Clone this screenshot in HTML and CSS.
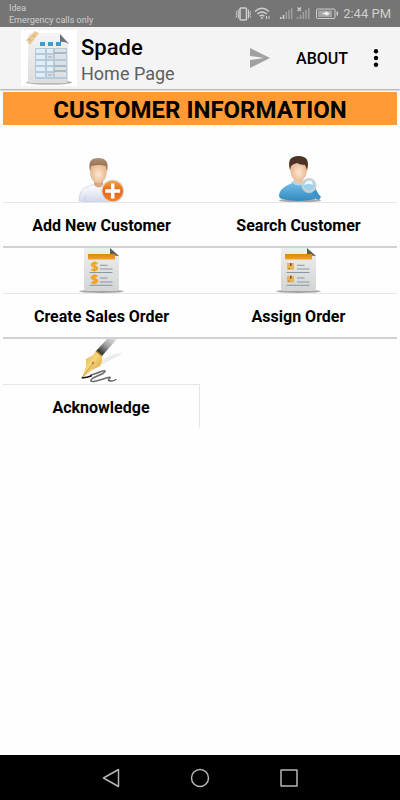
FILE: index.html
```html
<!DOCTYPE html>
<html lang="en">
<head>
<meta charset="utf-8">
<meta name="viewport" content="width=device-width, initial-scale=1">
<title>Spade</title>
<link rel="stylesheet" href="styles.css">
</head>
<body>
<div class="status">
  <div class="carrier"><span>Idea</span><span>Emergency calls only</span></div>
  <svg class="status-icons" width="104" height="16" viewBox="235 6 104 16" fill="none" stroke="#cfcfcf" aria-hidden="true">
    <rect x="240" y="8" width="6.500" height="12" rx="1" stroke-width="1.500"/>
    <path d="M236 11l1 1.500-1 1.500 1 1.500-1 2M238.300 9.500v9M250.700 11l-1 1.500 1 1.500-1 1.500 1 2M248.500 9.500v9" stroke-width="1"/>
    <path d="M255 11.500q7-6.500 14 0M257.300 14q4.700-4 9.400 0M259.600 16.300q2.400-2 4.800 0" stroke-width="1.400"/>
    <circle cx="262" cy="18" r="1" fill="#cfcfcf" stroke="none"/>
    <path d="M266.500 19v-3M269 19v-3" stroke-width="1"/>
    <path d="M280.700 19v-2M283.500 19v-4" stroke-width="1.600"/>
    <path d="M286.300 19v-7M289 19v-9M291.700 19V8M300.500 19v-4M303.300 19v-7M306 19v-9M308.800 19V8" stroke="#a0a0a0" stroke-width="1.500"/>
    <path d="M297.500 19v-2" stroke="#a0a0a0" stroke-width="1.500"/>
    <path d="M297.500 7.500l3.500 3.500M301 7.500l-3.500 3.500" stroke-width="1.200"/>
    <rect x="316.500" y="9" width="18.500" height="9.500" rx="1"/>
    <rect x="318" y="10.500" width="14" height="6.500" fill="#a4a4a4" stroke="none"/>
    <path d="M337.300 11.500v4" stroke-width="1.500"/>
    <path d="M321.500 13.800l4-1.500v-1.300l4.500 2.500-4 2.500v-1.300z" fill="#eee" stroke="none"/>
  </svg>
  <span class="time">2:44 PM</span>
</div>
<header class="appbar">
  <svg class="logo" width="56" height="56" viewBox="0 0 56 56" aria-hidden="true">
    <defs>
      <linearGradient id="sheet" x1="0" y1="0" x2="0" y2="1"><stop offset="0" stop-color="#f4f4f4"/><stop offset="1" stop-color="#dcdddf"/></linearGradient>
    </defs>
    <rect width="56" height="56" fill="#fff"/>
    <ellipse cx="28" cy="52.500" rx="23" ry="2.300" fill="#b9b9b9"/>
    <path d="M9 3h30l8 9v38q0 3-3 3H10q-3 0-3-3V5q0-2 2-2z" fill="url(#sheet)"/>
    <path d="M39 4l9 10q-5-3-9-2z" fill="#68727c"/>
    <path d="M5 10l9-9 4 2-9 12z" fill="#e9ca99"/>
    <path d="M8 9l2 2M12 5l2 2" stroke="#c99e60"/>
    <path d="M19 12h5v4h-5zM27 12h5v4h-5zM35 12h5v4h-5z" fill="#409bc9"/>
    <rect x="14" y="18" width="32" height="31" fill="#b6c9d8"/>
    <path d="M15 19h9v4h-9zM15 25h9v4h-9zM15 31h9v4h-9zM15 37h9v4h-9zM15 43h9v4h-9zM26 19h6v4h-6zM26 31h6v4h-6zM26 37h6v4h-6z" fill="#e0eef7"/>
    <path d="M26 25h6v4h-6zM26 43h6v4h-6zM34 19h11v3H34zM34 24h11v5H34zM34 31h11v4H34zM34 37h11v3H34zM34 42h11v5H34z" fill="#dbe1e5"/>
    <path d="M33 23h12M33 36h12M33 41h12M27 27h4M27 45h4" stroke="#9aa9b3"/>
  </svg>
  <div class="titles"><h1>Spade</h1><p>Home Page</p></div>
  <button class="send" type="button" aria-label="Send">
    <svg width="22" height="22" viewBox="0 0 22 22"><path d="M1 1l20 10L1 21V13l14-2L1 9z" fill="#a1a1a1"/></svg>
  </button>
  <button class="about" type="button">ABOUT</button>
  <button class="more" type="button" aria-label="More options">
    <svg width="6" height="18" viewBox="0 0 6 18"><circle cx="3" cy="2.300" r="2.200"/><circle cx="3" cy="9" r="2.200"/><circle cx="3" cy="15.700" r="2.200"/></svg>
  </button>
</header>
<main>
  <h2>CUSTOMER INFORMATION</h2>
  <div class="grid">
    <a class="tile" href="#add">
      <svg width="49" height="45" viewBox="0 0 49 45" aria-hidden="true">
        <defs>
          <radialGradient id="skin" cx=".5" cy=".6" r=".6"><stop offset="0" stop-color="#ffe7cf"/><stop offset="1" stop-color="#dfad83"/></radialGradient>
          <linearGradient id="shirt" x1="0" y1="0" x2="0" y2="1"><stop offset="0" stop-color="#fff"/><stop offset="1" stop-color="#d0d7eb"/></linearGradient>
          <linearGradient id="badge" x1="0" y1="0" x2="0" y2="1"><stop offset="0" stop-color="#f4a13c"/><stop offset=".5" stop-color="#e3671c"/><stop offset="1" stop-color="#f08426"/></linearGradient>
          <linearGradient id="hair" x1="0" y1="0" x2="0" y2="1"><stop offset="0" stop-color="#b58e70"/><stop offset="1" stop-color="#806047"/></linearGradient>
        </defs>
        <path d="M2 44q0-12 8-14l7-3h9l7 3q4 3 4 14-17 3-35 0z" fill="url(#shirt)" stroke="#c5cbdd" stroke-width=".6"/>
        <path d="M17 21h9v7q-4 5-9 0z" fill="#d8a882"/>
        <path d="M13 11Q13 4 21.300 4T30 11q0 15-8.700 15T13 11z" fill="url(#skin)"/>
        <path d="M13 14Q10 1 21 1q12 0 9 13l-1-5q-7-2-15 0z" fill="url(#hair)"/>
        <path d="M8 44v-5M33 31v6" stroke="#c7cee0"/>
        <circle cx="35.700" cy="34" r="11.500" fill="#d9dadd"/>
        <circle cx="35.700" cy="34" r="10.300" fill="url(#badge)"/>
        <path d="M35.700 26.500v15M28.200 34h15" stroke="#fff" stroke-width="3.500"/>
      </svg>
      <span>Add New Customer</span>
    </a>
    <a class="tile" href="#search">
      <svg width="49" height="45" viewBox="0 0 49 45" aria-hidden="true">
        <defs>
          <linearGradient id="blue" x1="0" y1="0" x2="0" y2="1"><stop offset="0" stop-color="#79bfe4"/><stop offset="1" stop-color="#2e8ac2"/></linearGradient>
        </defs>
        <ellipse cx="26" cy="43.500" rx="21" ry="1.700" fill="#aaa"/>
        <path d="M5 38q1-7 11-11l4-2h10l8 4q5 2 6 9l-3 4q-16 4-33 0-3-1-3-4z" fill="url(#blue)"/>
        <path d="M17 25l4-2h8l4 2q-8 7-16 0z" fill="#a5dbf1"/>
        <path d="M20 18h9v7q-4 3-9 0z" fill="#efc5a0"/>
        <path d="M16 10Q16 2 24.500 2T33.500 10q-1 14-9 14T16 10z" fill="url(#skin)"/>
        <path d="M16 13Q12-1 24.500-1 37-1 33 13q-1-3-2-5-5 0-8-2-4 1-6 3z" fill="#4d3325"/>
        <path d="M38 34l4 0 5 6-2 3-3-1z" fill="#3a94c9"/>
        <circle cx="35" cy="28.500" r="6.300" fill="#9dd2ec" stroke="#cbcfd2" stroke-width="2.400"/>
        <path d="M30 28q2-6 8-4l1 4q-4-2-9 0z" fill="#ecf8fd"/>
      </svg>
      <span>Search Customer</span>
    </a>
    <a class="tile" href="#create">
      <svg width="49" height="45" viewBox="0 0 49 45" aria-hidden="true">
        <defs>
          <linearGradient id="paper" x1="0" y1="0" x2="0" y2="1"><stop offset="0" stop-color="#efefef"/><stop offset="1" stop-color="#d3d4d5"/></linearGradient>
          <linearGradient id="bar" x1="0" y1="0" x2="0" y2="1"><stop offset="0" stop-color="#d98806"/><stop offset="1" stop-color="#f1a22b"/></linearGradient>
          <g id="doc">
            <ellipse cx="24.500" cy="43.300" rx="22.500" ry="1.600" fill="#a3a3a3"/>
            <path d="M7 0h26l9 8v32q0 3-3 3H10q-3 0-3-3z" fill="url(#paper)"/>
            <path d="M33 0l9 8q-5-1-9 0z" fill="#5a5b5f"/>
            <rect x="11" y="6" width="27" height="5.500" fill="url(#bar)"/>
            <path d="M23 17.300h7.500M23 21h12.500M23 30h7.500M23 34h12.500M12.500 24.500h23M12.500 37.300h23" stroke="#8798a2"/>
          </g>
        </defs>
        <use href="#doc"/>
        <g fill="none" stroke="#f2a31d" stroke-width="2">
          <path id="dollar" d="M20.500 15.500q-3-1-5 0-2 2 1 2.700l2 .6q3 1 1 2.700-2 1-5 0M17.500 13.500v10"/>
          <use href="#dollar" y="12.700"/>
        </g>
      </svg>
      <span>Create Sales Order</span>
    </a>
    <a class="tile" href="#assign">
      <svg width="49" height="45" viewBox="0 0 49 45" aria-hidden="true">
        <use href="#doc"/>
        <g id="box"><rect x="13" y="15" width="7" height="6.700" fill="#e9b357"/><path d="M16 15h1.500v3H16z" fill="#765030"/><path d="M14 20.500h2" stroke="#b77b2b"/></g>
        <use href="#box" y="12.700"/>
      </svg>
      <span>Assign Order</span>
    </a>
    <a class="tile" href="#acknowledge">
      <svg width="49" height="45" viewBox="0 0 49 45" aria-hidden="true">
        <defs>
          <linearGradient id="grip" x1="1" y1="0" x2="0" y2="1"><stop offset="0" stop-color="#e8e8e8"/><stop offset=".45" stop-color="#a0a0a0"/><stop offset=".8" stop-color="#333"/><stop offset="1" stop-color="#777"/></linearGradient>
          <linearGradient id="nib" x1="0" y1="0" x2="1" y2="1"><stop offset="0" stop-color="#dba744"/><stop offset=".45" stop-color="#f5d57c"/><stop offset="1" stop-color="#d0922a"/></linearGradient>
        </defs>
        <path d="M9 35L27 20Q35 14 46 14 38 19 26 25z" fill="#ececec"/>
        <path d="M30 0h10L25 17l-6-5z" fill="url(#grip)"/>
        <path d="M19 12l6 5 0 5-2 5-8 4-10 8 4-12 0-7 7-4z" fill="url(#nib)"/>
        <path d="M19 12l6 5" stroke="#b07d28" stroke-width="1.500"/>
        <path d="M5 38.500l11-14" stroke="#c6953d" stroke-width=".8"/>
        <circle cx="16" cy="24" r="1.200" fill="#b9822d"/>
        <path d="M13 36.500q9-3 13-4.500 4-1 0 2.500l-10 4.500q-5 4 1 3.500 8-2 14-4 4-1 1 1.500-2 2 3 2 3 0 4-2" fill="none" stroke="#6c6d72" stroke-width="1.600"/>
        <path d="M4.700 38.700q4 .5 10-2" fill="none" stroke="#111" stroke-width="1.500"/>
      </svg>
      <span>Acknowledge</span>
    </a>
  </div>
</main>
<nav class="navbar" aria-label="System">
  <button type="button" aria-label="Back"><svg width="20" height="20" viewBox="0 0 20 20"><path d="M17.500 1.500v17L2.500 10z"/></svg></button>
  <button type="button" aria-label="Home"><svg width="20" height="20" viewBox="0 0 20 20"><circle cx="10" cy="10" r="8.500"/></svg></button>
  <button type="button" aria-label="Recent apps"><svg width="20" height="20" viewBox="0 0 20 20"><rect x="2" y="2" width="16" height="16"/></svg></button>
</nav>
</body>
</html>
```
FILE: styles.css
```css
* { box-sizing: border-box; }
body {
  margin: 0;
  min-height: 100vh;
  display: flex;
  flex-direction: column;
  background: #fefefe;
  color: #000;
  font-family: Roboto, "Liberation Sans", sans-serif;
}
h1, h2, p { margin: 0; }
button {
  padding: 0;
  border: 0;
  background: none;
  color: inherit;
  font: inherit;
}
svg { display: block; }

.status {
  height: 27px;
  padding: 0 9px;
  display: flex;
  align-items: center;
  background: #757575;
  color: #cfcfcf;
}
.carrier {
  flex: 1;
  display: flex;
  flex-direction: column;
  font-size: 9px;
  line-height: 12px;
}
.time {
  margin-left: 4px;
  font-size: 13px;
  line-height: 16px;
}

.appbar {
  height: 62px;
  padding: 0 21px;
  display: flex;
  align-items: center;
  background: #f4f4f4;
  box-shadow: 0 1px 2px #999;
}
.titles {
  flex: 1;
  padding: 4px 0 0 4px;
}
.titles h1 {
  font-size: 22px;
  line-height: 28px;
  font-weight: 500;
}
.titles p {
  font-size: 18px;
  line-height: 24px;
  color: #606060;
}
.about {
  margin: 0 25px;
  font-size: 16px;
  font-weight: 500;
}

main {
  flex: 1;
  padding: 3px 3px 0;
}
h2 {
  margin-bottom: 32px;
  padding-top: 3px;
  background: #ff9a35;
  font-size: 24px;
  line-height: 30px;
  font-weight: 700;
  text-align: center;
}
.grid {
  display: grid;
  grid-template-columns: 1fr 1fr;
}
.tile {
  display: flex;
  flex-direction: column;
  align-items: center;
  color: inherit;
  text-decoration: none;
}
.tile svg { overflow: visible; }
.tile span {
  align-self: stretch;
  padding-top: 2px;
  border-top: 1px solid #e6e6e6;
  border-bottom: 2px solid #d2d2d2;
  font-size: 16px;
  line-height: 41px;
  font-weight: 700;
  text-align: center;
}
.tile:last-child span {
  border-right: 1px solid #e6e6e6;
  border-bottom: 0;
}

.navbar {
  height: 45px;
  padding: 0 67px;
  display: flex;
  justify-content: space-between;
  background: #000;
}
.navbar button { width: 88px; }
.navbar svg {
  margin: 0 auto;
  fill: none;
  stroke: #b5b5b5;
  stroke-width: 1.5px;
  stroke-linejoin: round;
}
```
